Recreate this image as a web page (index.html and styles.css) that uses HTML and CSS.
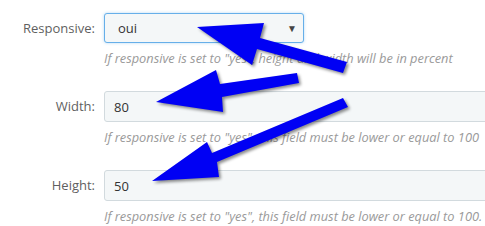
FILE: index.html
```html
<!DOCTYPE html>
<html>
<head>
<meta charset="utf-8">
<link rel="stylesheet" href="styles.css">
</head>
<body>
<div class="page">
  <form class="form">
    <div class="row">
      <label class="label">Responsive:</label>
      <div class="field">
        <div class="select focused"><span>oui</span><span class="caret">▼</span></div>
        <div class="help">If responsive is set to "yes", height and width will be in percent</div>
      </div>
    </div>
    <div class="row">
      <label class="label">Width:</label>
      <div class="field">
        <div class="input wide"><span>80</span></div>
        <div class="help">If responsive is set to "yes", this field must be lower or equal to 100</div>
      </div>
    </div>
    <div class="row">
      <label class="label">Height:</label>
      <div class="field">
        <div class="input wide"><span>50</span></div>
        <div class="help">If responsive is set to "yes", this field must be lower or equal to 100.</div>
      </div>
    </div>
  </form>
  <svg class="arrows" width="485" height="226" viewBox="0 0 485 226">
    <polygon points="197,27 264,23 260,38 347,62 343,73 257,49 252,65" />
    <polygon points="156,102 216,70 220,84 297,73 299,83 222,97 223,112" />
    <polygon points="152,181 207,142 212,153 343,98 348,107 217,162 219,177" />
  </svg>
</div>
</body>
</html>
```
FILE: styles.css
```css
html, body {
  margin: 0;
  padding: 0;
  background: #ffffff;
}
.page {
  position: relative;
  width: 485px;
  height: 226px;
  overflow: hidden;
  font-family: "Open Sans", "Liberation Sans", sans-serif;
}
.form {
  display: flex;
  flex-direction: column;
  gap: 24px;
  padding-top: 13px;
}
.row {
  display: grid;
  grid-template-columns: 95px 1fr;
  column-gap: 9px;
  align-items: start;
}
.label {
  height: 30px;
  line-height: 30px;
  text-align: right;
  font-size: 13px;
  color: #5f5f5f;
}
.field {
  display: flex;
  flex-direction: column;
}
.select {
  box-sizing: border-box;
  width: 200px;
  height: 30px;
  display: flex;
  align-items: center;
  justify-content: space-between;
  padding: 0 6px 0 13px;
  background: #f4f7f8;
  border: 1px solid #66afe9;
  border-radius: 3px;
  box-shadow: 0 0 3px rgba(102, 175, 233, 0.5);
  font-size: 13px;
  color: #333;
}
.caret {
  font-size: 10px;
  color: #444;
}
.input {
  box-sizing: border-box;
  height: 31px;
  display: flex;
  align-items: center;
  padding: 0 9px;
  background: #f4f7f8;
  border: 1px solid #d2dade;
  border-radius: 3px;
  font-size: 13px;
  color: #333;
}
.input.wide {
  width: 420px;
}
.help {
  margin-top: 6px;
  height: 18px;
  line-height: 18px;
  font-size: 12.8px;
  font-style: italic;
  color: #9a9a9a;
  white-space: nowrap;
}
.arrows {
  position: absolute;
  left: 0;
  top: 0;
  pointer-events: none;
  filter: drop-shadow(2px 2px 1.5px rgba(0, 0, 0, 0.45));
}
.arrows polygon {
  fill: #0000f4;
}
```
